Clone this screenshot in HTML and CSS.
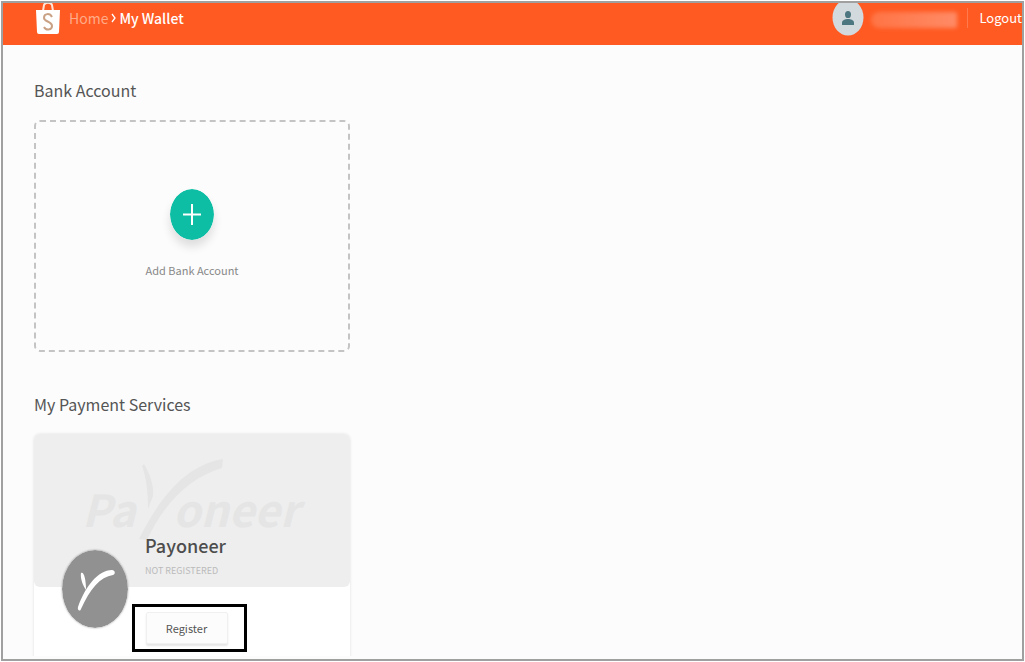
FILE: index.html
```html
<!DOCTYPE html>
<html lang="en">
<head>
    <meta charset="UTF-8">
    <meta name="viewport" content="width=device-width, initial-scale=1.0">
    <title>My Wallet</title>
    <link rel="stylesheet" href="styles.css">
</head>
<body>
    <div class="page">
        <header class="header">
            <a href="#" class="logo" aria-label="Seller Centre">
                <svg width="26" height="32" viewBox="0 0 26 32">
                    <path d="M8 8L9 2C10 -1 16 -1 17 2L18 8" fill="none" stroke="#ffe3d6" stroke-width="2"/>
                    <path d="M1 7h24l-1 22q0 2-2 2H4q-2 0-2-2z" fill="#fff"/>
                    <path d="M17 14C15 10 9 10 9 15C9 19 17 18 17 23C17 27 11 28 9 24" fill="none" stroke="#c9a184" stroke-width="2"/>
                </svg>
            </a>
            <nav class="breadcrumb">
                <a href="#">Home</a>
                <svg width="5" height="10" viewBox="0 0 5 10"><path d="M1 1l3 4-3 4" fill="none" stroke="#fff" stroke-width="1.3"/></svg>
                <span class="current">My Wallet</span>
            </nav>
            <div class="user">
                <svg class="avatar" width="32" height="37" viewBox="0 0 32 37">
                    <ellipse cx="16" cy="18.5" rx="15.5" ry="18" fill="#d3dadd"/>
                    <ellipse cx="16" cy="15.5" rx="3" ry="3.6" fill="#4c7680"/>
                    <path d="M10 26v-2c0-3 3-4 6-4s6 1 6 4v2z" fill="#4c7680"/>
                </svg>
                <span class="user-name"></span>
                <a href="#" class="logout">Logout</a>
            </div>
        </header>
        <main class="content">
            <section>
                <h2>Bank Account</h2>
                <button class="add-card">
                    <svg class="add-icon" width="44" height="51" viewBox="0 0 44 51">
                        <ellipse cx="22" cy="25.5" rx="22" ry="25.5" fill="#0dbda4"/>
                        <path d="M22 15v21M13 25.5h18" stroke="#fff" stroke-width="2"/>
                    </svg>
                    <span>Add Bank Account</span>
                </button>
            </section>
            <section>
                <h2>My Payment Services</h2>
                <div class="service">
                    <div class="service-top">
                        <svg class="watermark" width="240" height="84" viewBox="0 0 240 84" aria-hidden="true">
                            <text x="0" y="70">Pa</text>
                            <text x="91" y="70">oneer</text>
                            <path d="M62 7C68 17 72 28 71 39L66 52C66 34 64 20 60 9z"/>
                            <path d="M141 2C105 8 79 38 57 82L65 83C81 48 106 21 140 11z"/>
                        </svg>
                        <h3>Payoneer</h3>
                        <p class="status">Not registered</p>
                    </div>
                    <svg class="service-logo" width="66" height="78" viewBox="0 0 66 78">
                        <ellipse cx="33" cy="39" rx="33" ry="39" fill="#919191"/>
                        <path d="M19 23C22 21 24 30 24 40C21 36 18 28 19 23z" fill="#fff"/>
                        <path d="M50 20C53 20 54 24 51 25C38 27 28 39 19 59C18 62 15 60 16 57C23 37 36 20 50 20z" fill="#fff"/>
                    </svg>
                    <div class="service-bottom">
                        <div class="highlight">
                            <button class="register">Register</button>
                        </div>
                    </div>
                </div>
            </section>
        </main>
    </div>
</body>
</html>
```

FILE: styles.css
```css
* {
    box-sizing: border-box;
}
body {
    margin: 0;
    padding: 1px;
    background-color: #fff;
    font-family: "Noto Sans CJK SC", "Noto Sans", sans-serif;
    color: #555;
}
.page {
    display: flex;
    flex-direction: column;
    height: calc(100vh - 2px);
    border: 2px solid #a0a0a0;
    background-color: #fcfcfc;
    overflow: hidden;
}
.header {
    display: flex;
    flex-shrink: 0;
    align-items: center;
    height: 42px;
    padding-left: 32px;
    background-color: #ff5a22;
    overflow: hidden;
}
.logo {
    height: 42px;
}
.logo svg {
    display: block;
}
.breadcrumb {
    display: flex;
    align-items: center;
    gap: 3px;
    margin-left: 8px;
    padding-bottom: 12px;
    font-size: 14px;
    line-height: 20px;
    color: #fff;
}
.breadcrumb a {
    color: #ffab88;
    text-decoration: none;
}
.current {
    font-weight: 500;
}
.user {
    display: flex;
    align-items: center;
    margin-left: auto;
    padding-bottom: 12px;
}
.avatar {
    margin-top: -2px;
}
.user-name {
    width: 86px;
    height: 16px;
    margin: 4px 10px 0 7px;
    border-radius: 8px 2px 2px 8px;
    background: linear-gradient(90deg, #ff7445, #ff8b66);
    filter: blur(2px);
}
.logout {
    padding-left: 11px;
    border-left: 1px solid #ff7a4c;
    font-size: 13px;
    line-height: 20px;
    color: #fff;
    text-decoration: none;
}
.content {
    flex: 1;
    min-height: 0;
    margin-bottom: 3px;
    padding: 33px 31px 0;
    overflow: hidden;
}
h2 {
    margin: 0 0 18px;
    font-size: 16px;
    font-weight: 400;
    line-height: 24px;
}
.add-card {
    display: flex;
    flex-direction: column;
    align-items: center;
    justify-content: center;
    gap: 20px;
    width: 100%;
    max-width: 316px;
    height: 232px;
    margin-bottom: 40px;
    padding: 0 0 4px;
    border: 2px dashed #c4c4c4;
    border-radius: 6px;
    background: none;
    font-family: inherit;
    font-size: 11px;
    line-height: 20px;
    color: #888;
    cursor: pointer;
}
.add-icon {
    border-radius: 50%;
    box-shadow: 0 7px 10px rgba(0, 0, 0, 0.12);
}
.service {
    position: relative;
    max-width: 316px;
    border-radius: 6px;
    background-color: #fff;
    box-shadow: 0 0 3px rgba(0, 0, 0, 0.12);
}
.service-top {
    height: 153px;
    padding: 97px 0 0 111px;
    border-radius: 6px;
    background-color: #eee;
}
.watermark {
    position: absolute;
    top: 23px;
    left: 48px;
    fill: #e5e5e5;
    font: italic bold 44px "Noto Sans CJK SC", sans-serif;
}
h3 {
    position: relative;
    margin: 0;
    font-size: 18px;
    font-weight: 500;
    line-height: 28px;
    color: #4d4d4d;
}
.status {
    margin: 2px 0 0;
    font-size: 9px;
    line-height: 20px;
    color: #bbb;
    text-transform: uppercase;
}
.service-logo {
    position: absolute;
    top: 116px;
    left: 28px;
    border-radius: 50%;
    box-shadow: 0 0 2px rgba(0, 0, 0, 0.4);
}
.service-bottom {
    padding: 17px 0 30px 98px;
}
.highlight {
    display: flex;
    align-items: center;
    justify-content: center;
    width: 115px;
    height: 48px;
    padding-right: 6px;
    border: 3px solid #000;
}
.register {
    width: 82px;
    height: 32px;
    padding: 0;
    border: 1px solid #f0f0f0;
    border-radius: 2px;
    background-color: #fcfcfc;
    box-shadow: 0 2px 2px rgba(0, 0, 0, 0.1);
    font-family: inherit;
    font-size: 11px;
    color: #555;
    cursor: pointer;
}
```
